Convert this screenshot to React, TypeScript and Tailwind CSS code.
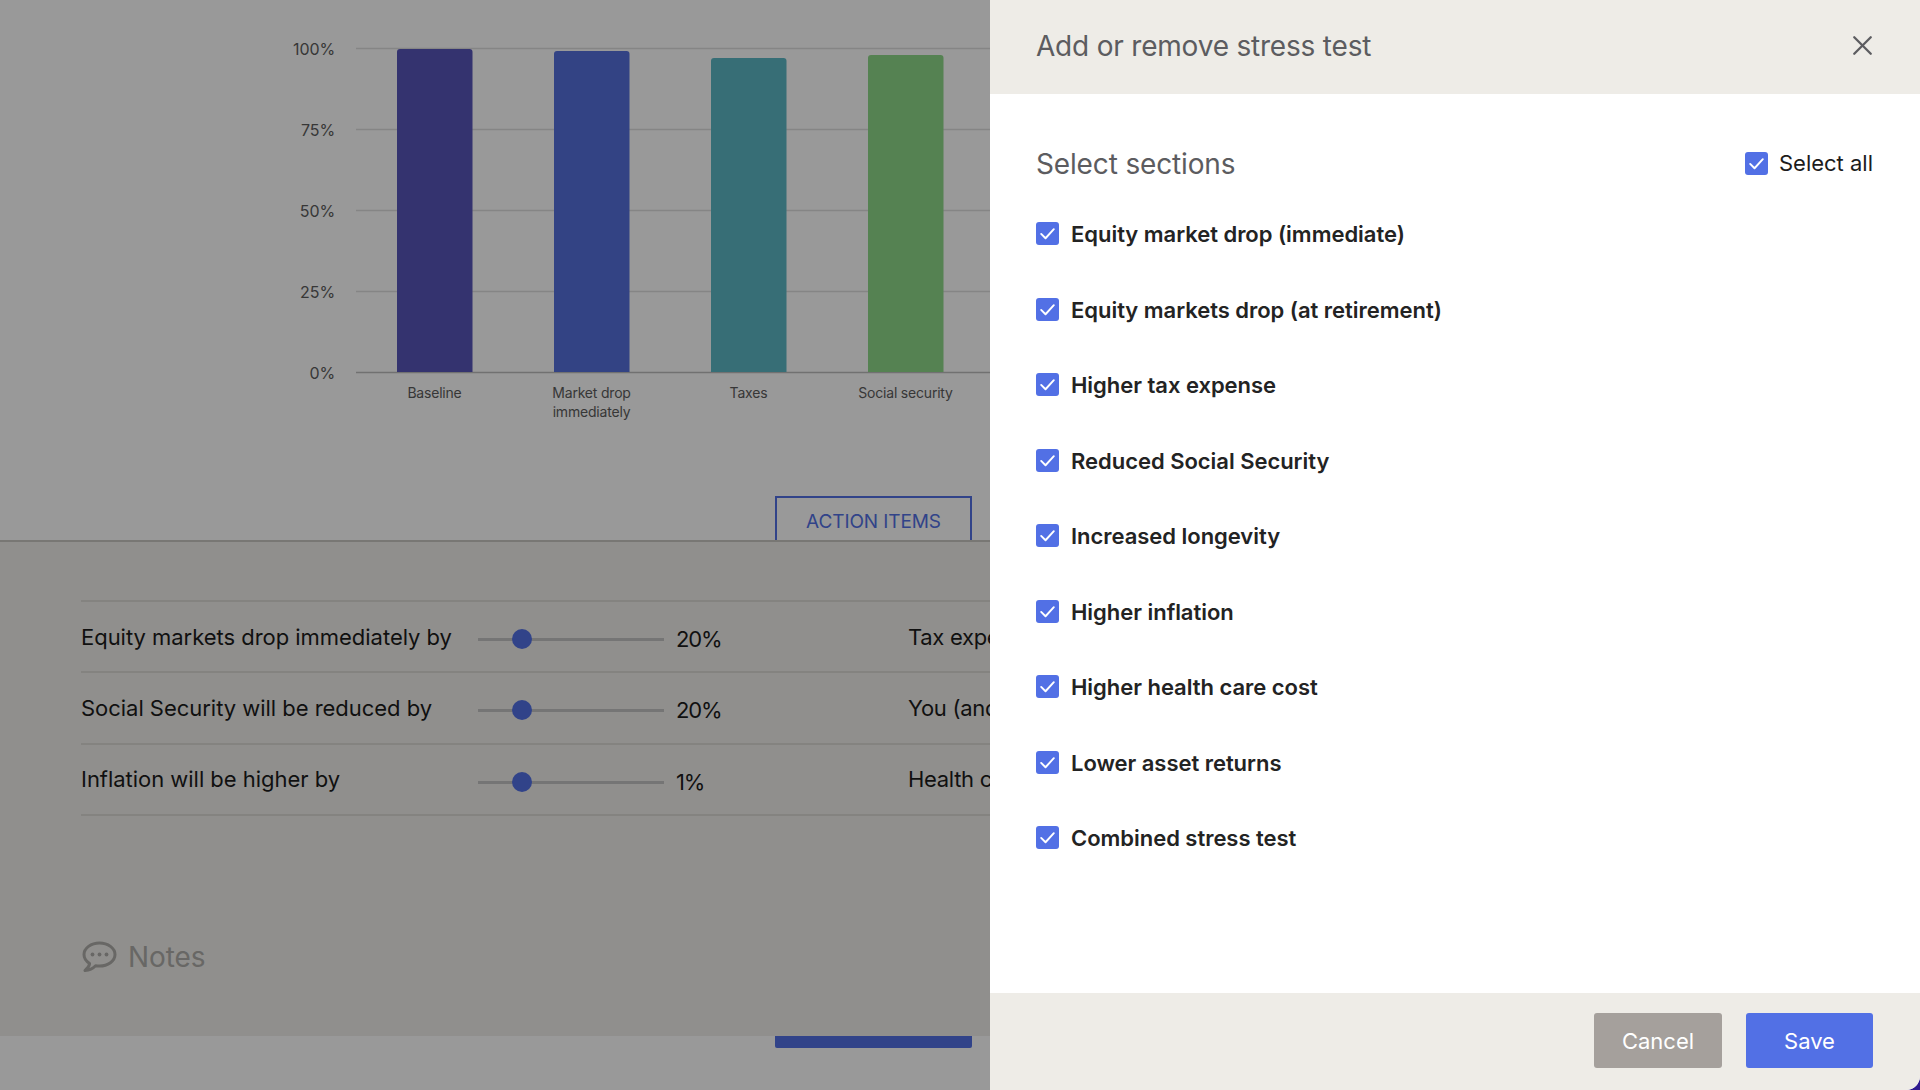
import React from "react";
import { X } from "lucide-react";

const font = { fontFamily: "Inter, 'Liberation Sans', sans-serif" };

const bars = [
  { x: 397, top: 49, color: "#5855b9", label: ["Baseline"] },
  { x: 554, top: 51, color: "#5570dc", label: ["Market drop", "immediately"] },
  { x: 711, top: 58, color: "#5db7c5", label: ["Taxes"] },
  { x: 868, top: 55, color: "#8ed989", label: ["Social security"] },
];
const ticks = [
  { y: 48, t: "100%" },
  { y: 129, t: "75%" },
  { y: 210, t: "50%" },
  { y: 291, t: "25%" },
  { y: 372, t: "0%" },
];

function Chart() {
  return (
    <svg width="990" height="440" className="block">
      {ticks.map((k) => (
        <g key={k.t}>
          <line x1="356" x2="990" y1={k.y + 0.5} y2={k.y + 0.5} stroke={k.y === 372 ? "#bdbdbd" : "#dedede"} strokeWidth="1.5" />
          <text x="335" y={k.y + 7} textAnchor="end" fontSize="16" letterSpacing="-0.1" fill="#5c5c5c" style={font}>{k.t}</text>
        </g>
      ))}
      {bars.map((b) => (
        <g key={b.x}>
          <path d={`M${b.x} 372V${b.top + 3}q0-3 3-3h69.5q3 0 3 3V372z`} fill={b.color} />
          {b.label.map((l, i) => (
            <text key={l} x={b.x + 37.5} y={398 + i * 19} textAnchor="middle" fontSize="14" letterSpacing="-0.2" fill="#5c5c5c" style={font}>{l}</text>
          ))}
        </g>
      ))}
    </svg>
  );
}

function Slider({ value }: { value: string }) {
  return (
    <div className="flex items-center pt-[6px]">
      <div className="relative h-[3px] w-[186px] bg-[#c4c4c4]">
        <div className="absolute left-[34px] top-[-9px] h-[20px] w-[20px] rounded-full bg-[#5270e5]" />
      </div>
      <span className="ml-[12px] text-[22px] tracking-[-1.2px] text-[#1c1c1c]">{value}</span>
    </div>
  );
}

const rows = [
  ["Equity markets drop immediately by", "20%", "Tax expe"],
  ["Social Security will be reduced by", "20%", "You (and"],
  ["Inflation will be higher by", "1%", "Health c"],
];

function Check() {
  return (
    <span className="flex h-[23px] w-[23px] shrink-0 items-center justify-center rounded-[3px] bg-[#5270e5]">
      <svg width="19" height="19" viewBox="0 0 24 24" fill="none" stroke="#fff" strokeWidth="2.4" strokeLinecap="round" strokeLinejoin="round">
        <path d="M4 12.5l5.5 5.5L20 6.5" />
      </svg>
    </span>
  );
}

const items = [
  "Equity market drop (immediate)",
  "Equity markets drop (at retirement)",
  "Higher tax expense",
  "Reduced Social Security",
  "Increased longevity",
  "Higher inflation",
  "Higher health care cost",
  "Lower asset returns",
  "Combined stress test",
];

export default function App() {
  return (
    <div className="relative h-[1090px] w-full overflow-hidden" style={font}>
      <div className="flex h-full flex-col bg-white">
        <section className="flex h-[542px] shrink-0 flex-col border-b-2 border-[#c9c6c2]">
          <Chart />
          <div className="mt-auto flex justify-start pl-[775px]">
            <button className="h-[44px] w-[197px] border-2 border-b-0 border-[#5270e5] pt-[7px] text-[19px] tracking-[-0.1px] text-[#5270e5]">ACTION ITEMS</button>
          </div>
        </section>
        <section className="flex h-[494px] shrink-0 flex-col bg-[#f0efeb] pl-[81px] pt-[58px]">
          <div className="flex flex-col border-t-2 border-[#dcdad6]">
            {rows.map((r) => (
              <div key={r[0]} className="flex h-[71.33px] items-center border-b-2 border-[#dcdad6]">
                <span className="w-[397px] shrink-0 pt-[1px] text-[22px] tracking-[-0.03px] text-[#1c1c1c]">{r[0]}</span>
                <div className="w-[430px] shrink-0"><Slider value={r[1]} /></div>
                <span className="shrink-0 whitespace-nowrap pt-[1px] text-[22px] tracking-[-0.3px] text-[#1c1c1c]">{r[2]}</span>
              </div>
            ))}
          </div>
          <div className="mt-[120px] flex items-center gap-[11px] text-[#adaca8]">
            <svg width="36" height="32" viewBox="0 0 36 32" fill="none" stroke="currentColor" strokeWidth="3" strokeLinejoin="round">
              <path d="M18.5 2C10 2 3 7.2 3 13.6c0 3.6 2.2 6.8 5.6 8.9-.3 2.2-1.6 4.8-4.6 7 4.4-.3 8.2-2.2 10.6-4.7 1.3.2 2.6.3 3.9.3 8.5 0 15.5-5.1 15.5-11.5S27 2 18.5 2z" />
              <circle cx="11.5" cy="13.5" r="1.9" fill="currentColor" stroke="none" />
              <circle cx="18.5" cy="13.5" r="1.9" fill="currentColor" stroke="none" />
              <circle cx="25.5" cy="13.5" r="1.9" fill="currentColor" stroke="none" />
            </svg>
            <span className="text-[28px] tracking-[-0.1px]">Notes</span>
          </div>
        </section>
        <div className="ml-[775px] h-[12px] w-[197px] rounded-b-[2px] bg-[#5270e5]" />
      </div>

      <div className="absolute inset-0 bg-black/40" />

      <aside className="absolute bottom-0 right-0 top-0 w-[930px] bg-[#2f1a8f]">
        <div className="flex h-full flex-col overflow-hidden rounded-br-[14px] bg-white">
          <header className="flex h-[94px] shrink-0 items-center justify-between bg-[#eeece7] pl-[46px] pr-[41px]">
            <h2 className="-mt-[2px] text-[28px] tracking-[-0.2px] text-[#5c5c60]">Add or remove stress test</h2>
            <X size={33} strokeWidth={1.7} className="-mt-[4px] text-[#5c5c60]" />
          </header>
          <div className="flex flex-1 flex-col pl-[46px] pr-[47px] pt-[52px]">
            <div className="flex h-[34px] items-center justify-between">
              <span className="mt-[1px] text-[28px] tracking-[-0.15px] text-[#5c5c60]">Select sections</span>
              <label className="flex items-center gap-[11px] text-[22px] text-[#1c1c1c]"><Check />Select all</label>
            </div>
            <ul className="mt-[41px] flex flex-col">
              {items.map((i) => (
                <li key={i} className="flex h-[75.5px] items-start gap-[12px] pt-[1px] text-[22px] font-semibold leading-[24px] tracking-[-0.03px] text-[#232323]">
                  <Check />
                  {i}
                </li>
              ))}
            </ul>
          </div>
          <footer className="flex h-[97px] shrink-0 items-start justify-end gap-[24px] bg-[#eeece7] pr-[47px] pt-[20px]">
            <button className="h-[55px] w-[128px] rounded-[3px] bg-[#a5a09c] pt-[2px] text-[22px] text-white">Cancel</button>
            <button className="h-[55px] w-[127px] rounded-[3px] bg-[#5270e5] pt-[2px] text-[22px] text-white">Save</button>
          </footer>
        </div>
      </aside>
    </div>
  );
}
